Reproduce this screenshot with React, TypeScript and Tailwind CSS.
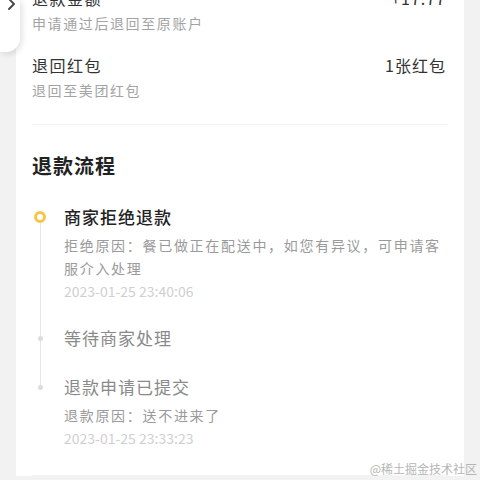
import React from 'react';

type Step = {
  title: string;
  desc?: string;
  time?: string;
  active?: boolean;
};

const steps: Step[] = [
  {
    title: '商家拒绝退款',
    desc: '拒绝原因：餐已做正在配送中，如您有异议，可申请客服介入处理',
    time: '2023-01-25 23:40:06',
    active: true,
  },
  { title: '等待商家处理' },
  {
    title: '退款申请已提交',
    desc: '退款原因：送不进来了',
    time: '2023-01-25 23:33:23',
  },
];

function InfoRow({ label, sub, value }: { label: string; sub: string; value: string }) {
  return (
    <div className="flex justify-between">
      <div>
        <div className="text-[16px] leading-[24px] tracking-[1.5px] text-[#333]">{label}</div>
        <div className="mt-[2px] text-[14px] leading-[22px] tracking-[1.6px] text-[#a3a3a3]">{sub}</div>
      </div>
      <div className="text-[16px] leading-[24px] tracking-[1px] text-[#333] pr-[2px]">{value}</div>
    </div>
  );
}

function TimelineStep({ step, first, last }: { step: Step; first: boolean; last: boolean }) {
  return (
    <div className="flex">
      <div className="w-4 flex flex-col items-center shrink-0">
        {step.active ? (
          <>
            <div className={`h-[7px] w-px ${first ? '' : 'bg-[#e8e8e8]'}`} />
            <div className="w-[12px] h-[12px] rounded-full border-[3px] border-[#f6c54a] bg-white shrink-0" />
          </>
        ) : (
          <>
            <div className={`h-[11px] w-px ${first ? '' : 'bg-[#e8e8e8]'}`} />
            <div className="w-[5px] h-[5px] rounded-full bg-[#dcdcdc] shrink-0" />
          </>
        )}
        {!last && <div className="flex-1 w-px bg-[#e8e8e8]" />}
      </div>
      <div className={`ml-4 flex-1 ${last ? 'pb-[25px]' : step.desc ? 'pb-[22px]' : 'pb-[23px]'}`}>
        <div
          className={`text-[17px] leading-[26px] tracking-[1px] ${
            step.active ? 'text-[#222] font-medium' : 'text-[#8a8a8a]'
          }`}
        >
          {step.title}
        </div>
        {step.desc && (
          <div className="mt-[4px] text-[14px] leading-[23px] tracking-[1.7px] text-[#9a9a9a] pr-1">
            {step.desc}
          </div>
        )}
        {step.time && (
          <div className="text-[14px] leading-[23px] text-[#cfcfcf]">{step.time}</div>
        )}
      </div>
    </div>
  );
}

export default function App() {
  return (
    <div
      className="relative w-[480px] h-[480px] overflow-hidden bg-[#f2f2f2] px-4"
      style={{ fontFamily: '"Noto Sans CJK SC", "Noto Sans", sans-serif' }}
    >
      <div className="bg-white px-4 -mt-[14px]">
        {/* Refund summary */}
        <div className="pb-[23px] border-b border-[#f3f3f3] space-y-[19px]">
          <InfoRow label="退款金额" sub="申请通过后退回至原账户" value="+17.77" />
          <InfoRow label="退回红包" sub="退回至美团红包" value="1张红包" />
        </div>

        {/* Refund process */}
        <div className="pt-[27px] border-b border-[#f3f3f3]">
          <h2 className="text-[20px] leading-[28px] font-bold tracking-[1px] text-[#222]">退款流程</h2>
          <div className="mt-[24px]">
            {steps.map((s, i) => (
              <TimelineStep key={s.title} step={s} first={i === 0} last={i === steps.length - 1} />
            ))}
          </div>
        </div>
      </div>

      {/* Floating back tab */}
      <div className="absolute top-0 left-0 w-[20px] h-[52px] bg-white rounded-br-[14px] shadow-[2px_2px_6px_rgba(0,0,0,0.12)]">
        <svg className="absolute left-[7px] -top-[2px]" width="9" height="12" viewBox="0 0 9 12" fill="none">
          <path d="M2 1l5 5-5 5" stroke="#444" strokeWidth="1.8" strokeLinecap="round" strokeLinejoin="round" />
        </svg>
      </div>

      {/* Watermark */}
      <div className="absolute right-[3px] bottom-[3px] text-[12px] leading-[16px] text-[#b5b5b5]">
        @稀土掘金技术社区
      </div>
    </div>
  );
}
